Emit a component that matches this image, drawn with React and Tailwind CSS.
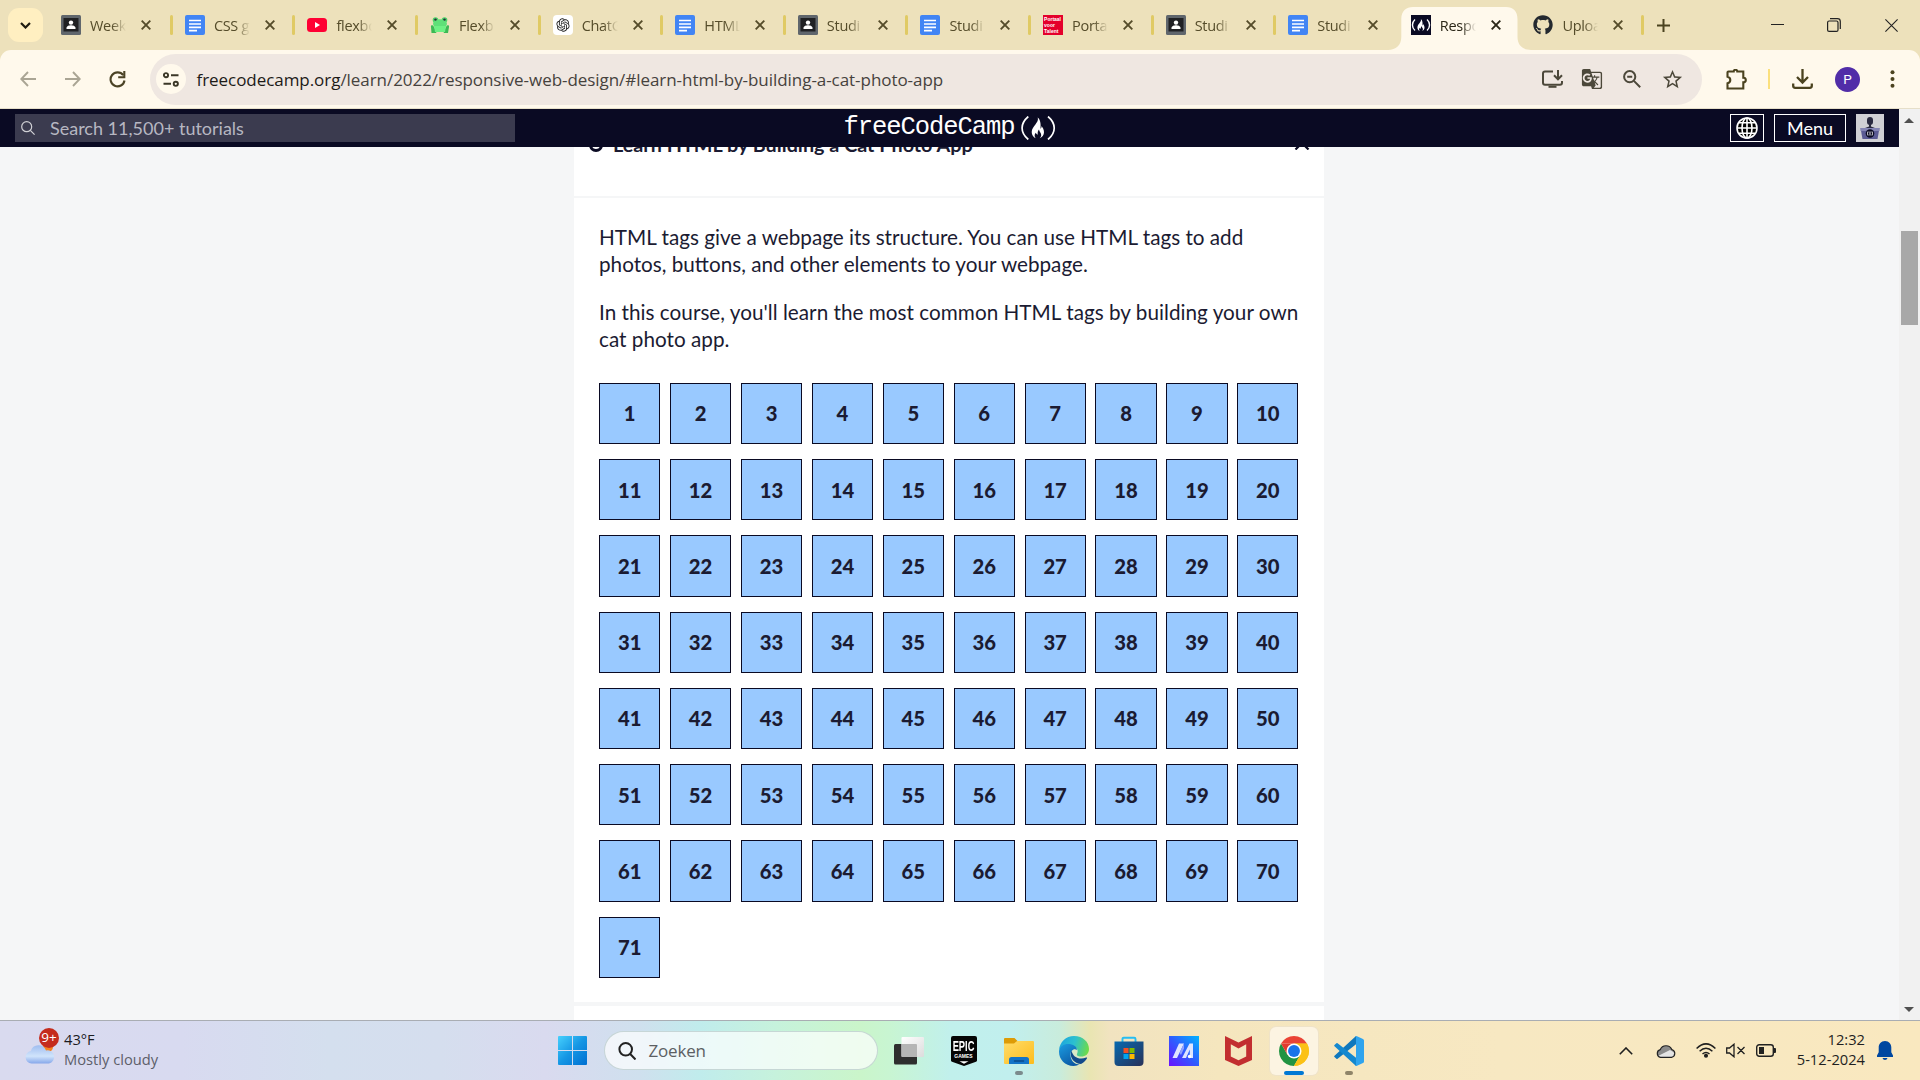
import { FaGithub } from "react-icons/fa";
import { RiOpenaiFill } from "react-icons/ri";
import { MdGTranslate, MdStarBorder } from "react-icons/md";

const FLAME = "M7.2 0c.9 3.2-.9 5-2.5 7.2C3.300 9.100 1.200 11.300 1.200 14.600c0 2.900 1.600 5 4 6.200-1.600-2.100-1.300-4.200.1-5.600.5 1.200 1.200 1.700 2 1.800-.4-2 .1-3.600 1.200-5 .2 2.400 2.200 3.300 2.200 5.600 0 1.400-.6 2.400-1.500 3.200 2.400-1 4.300-3.200 4.300-6 0-2.800-1.400-4.700-2.500-6.200.1 1.300-.2 2.100-1 2.600C10.300 7.200 10.400 2.800 7.200 0z";

const ContactIcon = () => (
  <svg className="size-5" viewBox="0 0 20 20">
    <rect width="20" height="20" rx="1.500" fill="#60666c" />
    <rect x="2.500" y="3" width="15" height="13.500" fill="#202124" />
    <circle cx="10" cy="7.600" r="2.200" fill="#fff" />
    <path d="M5.500 14v-1.200c0-1.700 3-2.500 4.500-2.500s4.500.8 4.500 2.500V14z" fill="#fff" />
  </svg>
);
const DocsIcon = () => (
  <svg className="size-5" viewBox="0 0 20 20">
    <rect width="20" height="20" rx="2" fill="#4285f4" />
    <path d="M4 5.500h12M4 9h12M4 12.300h12M4 15.600h8" stroke="#fff" strokeWidth="1.700" />
  </svg>
);
const YoutubeIcon = () => (
  <svg className="size-5" viewBox="0 0 20 20">
    <rect y="3" width="20" height="14" rx="3.500" fill="#ff0033" />
    <path d="M8 7l5 3-5 3z" fill="#fff" />
  </svg>
);
const FrogIcon = () => (
  <svg className="size-5" viewBox="0 0 20 20">
    <circle cx="5.500" cy="5" r="2.800" fill="#4fd06a" />
    <circle cx="14.500" cy="5" r="2.800" fill="#4fd06a" />
    <ellipse cx="10" cy="8.800" rx="7" ry="4.600" fill="#5fe078" />
    <path d="M1 12c-.6-2 2-2.600 3 0l1 2h10l1-2c1-2.600 3.600-2 3 0l-1 6h-4l-1-2H7l-1 2H1.500z" fill="#3cb954" />
    <path d="M4 11h12l-1 6H5z" fill="#6ef084" />
    <circle cx="5.500" cy="4.600" r="1.200" fill="#25303b" />
    <circle cx="14.500" cy="4.600" r="1.200" fill="#25303b" />
  </svg>
);
const ChatIcon = () => (
  <div className="flex size-5 items-center justify-center rounded bg-white">
    <RiOpenaiFill className="size-4 text-[#222]" />
  </div>
);
const PortaalIcon = () => (
  <div className="flex size-5 flex-col overflow-hidden bg-[#e4002b] pt-px pl-px font-['Liberation_Sans'] text-[5px] leading-[6px] font-bold text-white">
    <span>Portaal</span>
    <span>voor</span>
    <span>Talent</span>
  </div>
);
const CampIcon = () => (
  <svg className="size-5" viewBox="0 0 20 20">
    <rect width="20" height="20" fill="#0a0a23" />
    <path d="M4 4.500C.6 7.500.6 12.500 4 15.500M16 4.500c3.400 3 3.400 8 0 11" stroke="#fff" strokeWidth="1.400" fill="none" />
    <path d={FLAME} fill="#fff" transform="translate(5.700 4) scale(.58)" />
  </svg>
);
const HubIcon = () => <FaGithub className="size-5 text-[#24292f]" />;

const TABS = [
  ["Week", ContactIcon],
  ["CSS g", DocsIcon],
  ["flexbo", YoutubeIcon],
  ["Flexb", FrogIcon],
  ["ChatG", ChatIcon],
  ["HTML", DocsIcon],
  ["Studi", ContactIcon],
  ["Studi", DocsIcon],
  ["Porta", PortaalIcon],
  ["Studi", ContactIcon],
  ["Studi", DocsIcon],
  ["Respo", CampIcon],
  ["Uploa", HubIcon],
];
const ACTIVE = 11;

const Cross = () => (
  <svg className="size-[10px] shrink-0" viewBox="0 0 10 10" stroke="currentColor" strokeWidth="1.900">
    <path d="M.7.7l8.600 8.600M9.300.7L.7 9.300" />
  </svg>
);

function Tab({ title, Icon, active, sep }) {
  return (
    <div className={active ? "relative flex h-full w-[122.600px] shrink-0 items-center pl-[13px] text-[#2b2718]" : "relative flex h-full w-[122.600px] shrink-0 items-center pl-[13px] text-[#554c2a] first-of-type:w-[123.900px]"}>
      {active && (
        <svg className="absolute bottom-0 -left-[10px] h-[43px] w-[143px]" viewBox="0 0 143 43">
          <path d="M0 43c8 0 13.300-5 13.300-13V12C13.300 4 18 0 25 0h93c7 0 11.500 4 11.500 12v18c0 8 5 13 13.500 13z" fill="#fff9ec" />
        </svg>
      )}
      <div className="relative shrink-0"><Icon /></div>
      <div className="relative top-px ml-[9px] w-[36px] overflow-hidden text-[14.500px] tracking-[-0.300px] whitespace-nowrap [mask-image:linear-gradient(to_right,black_60%,transparent)]">{title}</div>
      <div className="relative ml-[15px]"><Cross /></div>
      {sep && <div className="ml-auto h-5 w-[3px] translate-x-px rounded-full bg-[#e0ca64]" />}
    </div>
  );
}

function TabStrip() {
  return (
    <div className="flex h-[50px] items-center bg-[#ede1bb] pl-2">
      <div className="mr-[5px] flex h-[34px] w-[35px] items-center justify-center rounded-[11px] bg-[#ffefc1]">
        <svg className="h-[7px] w-[11px]" viewBox="0 0 11 7" fill="none" stroke="#1f1b10" strokeWidth="2.200"><path d="M1 1l4.500 4.500L10 1" /></svg>
      </div>
      <div className="flex h-full">
        {TABS.map(([title, Icon], i) => (
          <Tab key={i} title={title} Icon={Icon} active={i === ACTIVE} sep={i !== ACTIVE && i !== ACTIVE - 1} />
        ))}
      </div>
      <svg className="ml-[14px] size-[13px]" viewBox="0 0 13 13" stroke="#4b431f" strokeWidth="2"><path d="M6.500 0v13M0 6.500h13" /></svg>
      <div className="mr-[22px] ml-auto flex items-center text-[#222]">
        <svg className="mr-[43px] h-[14px] w-[13px]" viewBox="0 0 13 14" stroke="currentColor"><path d="M0 6.500h13" /></svg>
        <svg className="mr-[44px] size-[14px]" viewBox="0 0 14 14" stroke="currentColor" strokeWidth="1.200" fill="none"><rect x=".6" y="3" width="10.400" height="10.400" rx="1.500" /><path d="M3 .7h7.500a2.800 2.800 0 0 1 2.800 2.800V11" /></svg>
        <svg className="size-[13px]" viewBox="0 0 13 13" stroke="currentColor" strokeWidth="1.100"><path d="M.4.4l12.200 12.200M12.600.4L.4 12.600" /></svg>
      </div>
    </div>
  );
}

function Toolbar() {
  return (
    <div className="bg-[#ede1bb]">
      <div className="flex h-[59px] items-center rounded-t-[11px] border-b border-[#e6dfc9] bg-[#fff9ec]">
        <svg className="ml-5 size-4" viewBox="0 0 16 16" fill="none" stroke="#aaa594" strokeWidth="1.900"><path d="M16 8H1.500M8 1L1.300 8 8 15" /></svg>
        <svg className="ml-[29px] size-4" viewBox="0 0 16 16" fill="none" stroke="#aaa594" strokeWidth="1.900"><path d="M0 8h14.500M8 1l6.700 7L8 15" /></svg>
        <svg className="ml-[28px] size-[17px]" viewBox="0 0 17 17" fill="none" stroke="#4b4325" strokeWidth="2.100"><path d="M14.200 4.200A7 7 0 1 0 15.500 9.500" /><path d="M15.300 0v6.300H9.200" /></svg>
        <div className="ml-[24px] flex h-[51px] w-[1552px] items-center rounded-full bg-[#efe7e1] pr-5 pl-[6px]">
          <div className="flex size-[30px] items-center justify-center rounded-full bg-[#fff9ec]">
            <svg className="h-[15px] w-4" viewBox="0 0 16 15" fill="none" stroke="#3b3727" strokeWidth="1.900"><circle cx="3" cy="3.200" r="2.100" /><path d="M8 3.200h7.500M.5 11.800H8" /><circle cx="12.800" cy="11.800" r="2.100" /></svg>
          </div>
          <div className="relative top-px ml-[10.500px] text-[17px] tracking-[-0.050px] whitespace-nowrap text-[#46423d]"><span className="text-[#1d1b18]">freecodecamp.org</span>/learn/2022/responsive-web-design/#learn-html-by-building-a-cat-photo-app</div>
          <div className="ml-auto flex items-center text-[#4c483a]">
            <svg className="mr-[18px] h-[18px] w-[21px]" viewBox="0 0 21 18" fill="none" stroke="currentColor" strokeWidth="2"><path d="M11 1.500H3Q1 1.500 1 3.500v9.300q0 2 2 2h15q2 0 2-2V11" /><path d="M6.500 16.800h8" /><path d="M16 0v9M12 5.300l4 4 4-4" /></svg>
            <MdGTranslate className="mr-[20px] size-[22px]" />
            <svg className="mr-[20px] size-[18px]" viewBox="0 0 18 18" fill="none" stroke="currentColor" strokeWidth="2"><circle cx="6.700" cy="6.700" r="5.600" /><path d="M4.200 6.700h5M10.900 10.900L17.200 17.200" /></svg>
            <MdStarBorder className="-mr-[2px] size-[23px]" />
          </div>
        </div>
        <svg className="ml-6 size-[21px]" viewBox="0 0 21 21" fill="none" stroke="#4b431f" strokeWidth="2.100"><path d="M2.500 2.500h5.200q0-1.700 1.800-1.700t1.800 1.700h6v6.200q2.500 0 2.500 2.300t-2.500 2.300v6.200H1.500v-5.200q2.800-.8 2.800-3.300T1.500 7.700V3.500q0-1 1-1z" /></svg>
        <div className="ml-[21px] h-5 w-[2px] bg-[#fbe07d]" />
        <svg className="ml-[22px] h-5 w-[21px]" viewBox="0 0 21 20" fill="none" stroke="#4b431f" strokeWidth="2.300"><path d="M10.500 0v13M5 8l5.500 5.500L16 8M1.200 14.500v2.300q0 2 2 2h14.600q2 0 2-2v-2.300" /></svg>
        <div className="ml-[22px] flex size-[25px] items-center justify-center rounded-full bg-[#512da8] font-[Roboto] text-[13.500px] text-white">P</div>
        <svg className="ml-[30px] h-[18px] w-[5px]" viewBox="0 0 5 18" fill="#4b431f"><circle cx="2.500" cy="2.200" r="2" /><circle cx="2.500" cy="9" r="2" /><circle cx="2.500" cy="15.800" r="2" /></svg>
      </div>
    </div>
  );
}

function SiteHeader() {
  return (
    <div className="relative z-10 grid h-[38px] shrink-0 grid-cols-[1fr_auto_1fr] items-center bg-[#0a0a23] pr-[15px] pl-[15px] font-[Lato]">
      <div className="flex h-7 w-[500px] items-center bg-[#3b3b4f] pl-[6px] text-[18px] text-[#b7b7c2]">
        <svg className="mr-[15px] size-[14px]" viewBox="0 0 14 14" fill="none" stroke="#d0d0d5" strokeWidth="1.200"><circle cx="5.700" cy="5.700" r="5" /><path d="M9.300 9.300L13.600 13.600" /></svg>
        Search 11,500+ tutorials
      </div>
      <div className="flex h-full items-center text-white">
        <span className="-mt-[1px] font-['Liberation_Mono'] text-[25.500px] leading-none tracking-[-1.050px]">freeCodeCamp</span>
        <svg className="ml-[5px] h-[24px] w-[36px]" viewBox="0 0 36 24" fill="none" stroke="#fff" strokeWidth="1.700">
          <path d="M8.300.5C0 7.500 0 16.500 8.300 23.500M28 .5c8.300 7 8.300 16 0 23" />
          <path d={FLAME} fill="#fff" stroke="none" transform="translate(10.500 1.500)" />
        </svg>
      </div>
      <div className="flex items-center justify-end">
        <div className="flex h-7 w-[34px] items-center justify-center border border-white">
          <svg className="size-[22px]" viewBox="0 0 22 22" fill="#000" stroke="#fff" strokeWidth="1.600"><circle cx="11" cy="11" r="10" /><ellipse cx="11" cy="11" rx="5" ry="10" /><path d="M11 1v20M1 11h20M2.800 5.700h16.400M2.800 16.300h16.400" /></svg>
        </div>
        <div className="ml-[10px] flex h-7 w-[72px] items-center justify-center border border-white text-[18px] text-white">Menu</div>
        <svg className="ml-[10px] size-7" viewBox="0 0 28 28">
          <rect width="28" height="28" fill="#d0d0d5" />
          <rect x="11" y="3" width="6" height="8" rx="3" fill="#2a2a40" />
          <path d="M13 10h2v2.500l4 1.500H9l4-1.500z" fill="#2a2a40" />
          <path d="M4.500 14h19l-2 11h-15z" fill="#5b5b94" />
          <path d="M4.500 14h19v3h-19z" fill="#8585b5" />
          <circle cx="14" cy="19.500" r="4.300" fill="#0a0a23" />
          <path d="M12 17.500q-1 2 0 4M16 17.500q1 2 0 4M14 17.500v4" stroke="#fff" strokeWidth=".9" fill="none" />
        </svg>
      </div>
    </div>
  );
}

const STEPS = Array.from({ length: 71 }, (_, i) => i + 1);

function Course() {
  return (
    <div className="ml-[574px] flex h-[873px] w-[750px] flex-col overflow-hidden font-[Lato] text-[#1b1b32]">
      <div className="flex h-[49px] shrink-0 items-start bg-white">
        <div className="-mt-[9px] ml-[15px] size-[14px] rounded-full border-[3px] border-[#0a0a23]" />
        <div className="-mt-[15px] ml-[10px] text-[19.800px] leading-6 font-bold whitespace-nowrap">Learn HTML by Building a Cat Photo App</div>
        <svg className="-mt-[6px] mr-[14px] ml-auto h-[9px] w-[16px]" viewBox="0 0 16 9" fill="none" stroke="#0a0a23" strokeWidth="2.200"><path d="M1.500 8.500L8 2l6.500 6.500" /></svg>
      </div>
      <div className="mt-[2px] shrink-0 bg-white px-[25px] pt-[25.500px] pb-[24px]">
        <p className="text-[20.700px] leading-[27px]">HTML tags give a webpage its structure. You can use HTML tags to add<br />photos, buttons, and other elements to your webpage.</p>
        <p className="mt-[21px] text-[20.700px] leading-[27px] tracking-[0.025px] whitespace-nowrap">In this course, you'll learn the most common HTML tags by building your own<br />cat photo app.</p>
        <div className="mt-[30.500px] ml-[.1px] grid grid-cols-[repeat(10,61.200px)] gap-x-[9.720px] gap-y-[15.040px]">
          {STEPS.map((n) => (
            <div key={n} className="flex h-[61.200px] items-center justify-center border border-[#0a0a23] bg-[#99c9ff] text-[20.250px] font-black">{n}</div>
          ))}
        </div>
      </div>
      <div className="mt-1 grow bg-white" />
    </div>
  );
}

function Page() {
  return (
    <div className="flex h-[911px] bg-[#f5f6f7]">
      <div className="flex w-[1899px] flex-col">
        <SiteHeader />
        <Course />
      </div>
      <div className="flex grow flex-col items-center bg-[#f1f1f1] pt-[9px]">
        <svg className="mr-px h-[5px] w-[10px]" viewBox="0 0 10 5" fill="#505050"><path d="M0 5l5-5 5 5z" /></svg>
        <div className="mt-[108px] mr-px h-[94px] w-[17px] bg-[#a8a8a8]" />
        <svg className="mt-auto mr-px mb-[8px] h-[5px] w-[10px]" viewBox="0 0 10 5" fill="#505050"><path d="M0 0l5 5 5-5z" /></svg>
      </div>
    </div>
  );
}

const WindowsLogo = () => (
  <svg className="size-[29px]" viewBox="0 0 29 29">
    <defs><linearGradient id="win" x1="0" y1="0" x2="1" y2="1"><stop stopColor="#46d0fd" /><stop offset=".5" stopColor="#1596e4" /><stop offset="1" stopColor="#006fd1" /></linearGradient></defs>
    <path d="M1 0h13v14H0V1q0-1 1-1zM15 0h13q1 0 1 1v13H15zM0 15h14v14H1q-1 0-1-1zM15 15h14v13q0 1-1 1H15z" fill="url(#win)" />
  </svg>
);
const TaskView = () => (
  <svg className="size-[30px]" viewBox="0 0 30 30">
    <defs><linearGradient id="tv" x1="0" y1="0" x2="1" y2="1"><stop stopColor="#fff" /><stop offset="1" stopColor="#dcdcdc" /></linearGradient></defs>
    <rect y="8" width="23" height="20.500" rx="1.500" fill="#2e2e2e" />
    <rect x="7.500" y="1" width="22.500" height="20" rx="1" fill="url(#tv)" />
    <path d="M7.500 8H22q1 0 1 1v12H8.500q-1 0-1-1z" fill="#b5b5b5" />
  </svg>
);
const Epic = () => (
  <div className="relative h-[30px] w-[26px]">
    <svg className="absolute inset-0" viewBox="0 0 26 30"><path d="M2 0h22q2 0 2 2v22.500q0 1-1 1.300L13 30 1 25.800q-1-.3-1-1.300V2q0-2 2-2z" fill="#050505" /><path d="M8.500 25.300h9L13 27.800z" fill="#fff" /></svg>
    <div className="relative flex flex-col items-center pt-[3px] font-['Liberation_Sans'] font-bold text-white">
      <span className="scale-x-[.62] text-[15px] leading-[13px]">EPIC</span>
      <span className="mt-[2px] text-[5px] leading-[5px]">GAMES</span>
    </div>
  </div>
);
const Folder = () => (
  <svg className="size-[30px]" viewBox="0 0 30 30">
    <defs><linearGradient id="fo" x1="0" y1="0" x2="1" y2="1"><stop stopColor="#ffdc6a" /><stop offset="1" stopColor="#fdbc1c" /></linearGradient></defs>
    <path d="M0 3q0-1 1-1h9.500l3 3H28q1 0 1 1v5H0z" fill="#dd9b07" />
    <path d="M0 7.500h10L13 5h16q1 0 1 1v21q0 1-1 1H1q-1 0-1-1z" fill="url(#fo)" />
    <path d="M5 28v-4.500q0-2.500 2.500-2.500h15q2.500 0 2.500 2.500V28z" fill="#1374c8" />
    <path d="M10.500 25h9" stroke="#0a4a8a" strokeWidth="1.500" strokeLinecap="round" />
  </svg>
);
const Edge = () => (
  <svg className="size-[30px]" viewBox="0 0 30 30">
    <defs>
      <linearGradient id="e1" x1="0" y1=".3" x2="1" y2=".5"><stop stopColor="#1ba5df" /><stop offset=".5" stopColor="#2cc0cf" /><stop offset="1" stopColor="#6ddb4b" /></linearGradient>
      <linearGradient id="e2" x1="0" y1="0" x2=".6" y2="1"><stop stopColor="#1b9de2" /><stop offset="1" stopColor="#0c59a4" /></linearGradient>
    </defs>
    <path d="M0 14C.8 6 7 0 15 0c9 0 15 6 15 13 0 5-3.600 7.500-7.800 7.500-3.500 0-5-1.300-4-3 1.600-3-.5-7.500-6.200-7.500C7 9.500 2 10 0 14z" fill="url(#e1)" />
    <path d="M0 15.500c0-5 5-7.500 9-7.500 5 0 9 2.500 9 6-3-2-6.500.5-6.500 5 0 5.500 4.500 10.500 9.500 9-2 1.300-4 2-6.500 2C6 30 0 23.500 0 15.500z" fill="url(#e2)" />
    <path d="M12.500 14.500c-3 8 4 13.500 9.500 13.500 3-1.500 5-4 6-5.800.3-.6-.2-1-.8-.7-7 3-13.500-.5-14.700-7z" fill="#114a8b" />
  </svg>
);
const Store = () => (
  <svg className="size-[30px]" viewBox="0 0 30 30">
    <defs><linearGradient id="st" x1="0" y1="0" x2="1" y2="1"><stop stopColor="#0669b0" /><stop offset="1" stopColor="#293158" /></linearGradient></defs>
    <path d="M8.500 6.500V3q0-1.300 1.300-1.300h10.400q1.300 0 1.300 1.300v3.500" fill="none" stroke="#25bdf3" strokeWidth="1.900" />
    <path d="M.5 5.500h29V26q0 4-4 4h-21q-4 0-4-4z" fill="url(#st)" />
    <path d="M9.500 12h5v5h-5z" fill="#f25022" /><path d="M15.500 12h5v5h-5z" fill="#7fba00" /><path d="M9.500 18h5v5h-5z" fill="#00a4ef" /><path d="M15.500 18h5v5h-5z" fill="#ffb900" />
  </svg>
);
const MyAsus = () => (
  <svg className="size-[30px]" viewBox="0 0 30 30">
    <defs><linearGradient id="as" x1="0" y1="1" x2="1" y2="0"><stop stopColor="#6a11ff" /><stop offset=".5" stopColor="#2f5cff" /><stop offset="1" stopColor="#00b4ff" /></linearGradient></defs>
    <rect width="30" height="30" fill="url(#as)" />
    <path d="M3.500 22L10 7.500h5L8 22zM13 22L20.500 7.500H24V22h-3.200v-8.500L17 22z" fill="#dfe5ff" />
    <path d="M10.500 17l4.500-9.500v5L12 19z" fill="#8fa0ff" />
    <circle cx="20.500" cy="20.500" r="1.700" fill="#fff" />
  </svg>
);
const Mcafee = () => (
  <svg className="h-[30px] w-[27px]" viewBox="0 0 27 30"><path d="M0 0l13.500 6.500L27 0v24l-13.500 6L0 24zM5.800 8.200v12.300l7.700 3.700 7.700-3.700V8.200l-7.700 4.200z" fill="#c22e30" /></svg>
);
const Chrome = () => (
  <svg className="size-[30px]" viewBox="0 0 48 48">
    <path d="M3.220 12A24 24 0 0 1 44.780 12L24 12z" fill="#ea4335" />
    <path d="M3.220 12A24 24 0 0 0 24 48L34.400 30 24 24 13.600 30z" fill="#229342" />
    <path d="M44.780 12A24 24 0 0 1 24 48L34.400 30 24 12z" fill="#fbc116" />
    <path d="M3.220 12h41.560L24 24 13.600 30z" fill="#e33b2e" />
    <path d="M24 12h20.780A24 24 0 0 1 24 48L34.400 30z" fill="#fbc116" />
    <circle cx="24" cy="24" r="12" fill="#fff" />
    <circle cx="24" cy="24" r="9.500" fill="#1a73e8" />
  </svg>
);
const Code = () => (
  <svg className="size-[30px]" viewBox="0 0 30 30">
    <path d="M22 0v8.300L3.600 22.800q-.6.500-1.200 0L.5 21.100q-.7-.7 0-1.300z" fill="#0f78bd" />
    <path d="M22 30v-8.300L3.600 7.200q-.6-.5-1.200 0L.5 8.900q-.7.700 0 1.300z" fill="#1488cf" />
    <path d="M21 .5q.9-.8 2-.3l6 2.700q1 .5 1 1.600v21q0 1.100-1 1.600l-6 2.700q-1.100.5-2-.3 1 .5 1-1V1.500q0-1.500-1-1z" fill="#2fa4ee" />
  </svg>
);

function Pinned({ children, className, bar }) {
  return (
    <div className={"relative flex h-12 w-12 items-center justify-center " + (className || "")}>
      {children}
      {bar && <div className={"absolute bottom-0 h-1 rounded-full " + bar} />}
    </div>
  );
}

function Taskbar() {
  return (
    <div className="grid h-[60px] grid-cols-[534px_auto_1fr] items-center border-t border-[#a9adb3] bg-[linear-gradient(90deg,#d9daef_0px,#d8daf0_180px,#d4dfee_330px,#d5deee_440px,#d9daef_545px,#cfe0ee_640px,#c0ecec_700px,#c6f2dc_775px,#caf5ca_860px,#c8f5d2_890px,#c1f0ec_950px,#c1efee_1010px,#c9ecdc_1060px,#e9e5b2_1090px,#f1e3c0_1110px,#f5e6be_1220px,#f7e8c2_1500px,#f9e8bf_1920px)]">
      <div className="flex items-center pl-[25px]">
        <div className="relative h-[40px] w-[31px]">
          <svg className="absolute top-[12px] left-0 h-[22px] w-[31px]" viewBox="0 0 31 22">
            <defs><linearGradient id="cl" x1="0" y1="0" x2="0" y2="1"><stop stopColor="#9fbdf0" /><stop offset=".6" stopColor="#d0e4fb" /><stop offset="1" stopColor="#86a7ea" /></linearGradient></defs>
            <circle cx="23" cy="4" r="5" fill="#f58220" />
            <path d="M6.500 20.500a6.300 6.300 0 0 1-.7-12.500A8 8 0 0 1 21 7.500a6.600 6.600 0 0 1 3 13z" fill="url(#cl)" />
          </svg>
          <div className="absolute -top-[3px] left-[14px] flex size-5 items-center justify-center rounded-full bg-[#c42b1c] text-[13.500px] text-white">9+</div>
        </div>
        <div className="mb-[3px] ml-2 text-[14.700px] leading-[20px]">
          <div className="text-[#1b1b1f]">43°F</div>
          <div className="text-[#5d5f6a]">Mostly cloudy</div>
        </div>
      </div>
      <div className="flex items-center">
        <div className="ml-[24px]"><WindowsLogo /></div>
        <div className="ml-[16.500px] flex h-[39px] w-[274px] items-center rounded-full border border-[#b5c8c8]/70 bg-white/70 pl-[13px] text-[17px] tracking-[-0.200px] text-[#5c6063]">
          <svg className="mr-[13px] size-[18px]" viewBox="0 0 18 18" fill="none" stroke="#222" strokeWidth="2"><circle cx="7.700" cy="7.300" r="6.300" /><path d="M12.200 12l5.300 5.500" /></svg>
          Zoeken
        </div>
        <div className="ml-[7px] flex gap-[7px]">
          <Pinned><TaskView /></Pinned>
          <Pinned><Epic /></Pinned>
          <Pinned bar="w-2 bg-[#7b8b8d]"><Folder /></Pinned>
          <Pinned><Edge /></Pinned>
          <Pinned><Store /></Pinned>
          <Pinned><MyAsus /></Pinned>
          <Pinned><Mcafee /></Pinned>
          <Pinned className="rounded-md bg-[#fcf4e2] shadow-[0_0_0_1px_#efe3c8]" bar="w-5 bg-[#0078d4]"><Chrome /></Pinned>
          <Pinned bar="w-2 bg-[#8f8468]"><Code /></Pinned>
        </div>
      </div>
      <div className="flex items-center justify-end pr-[27px] text-[#1f1f1f]">
        <svg className="mr-[23px] h-[8px] w-[14px]" viewBox="0 0 14 8" fill="none" stroke="currentColor" strokeWidth="1.600"><path d="M.8 7.200L7 1l6.200 6.200" /></svg>
        <svg className="mr-[20px] h-[14px] w-[20px]" viewBox="0 0 20 14"><path d="M4.500 13.300a3.900 3.900 0 0 1-.3-7.600A6.300 6.300 0 0 1 15.800 5.500a4 4 0 0 1-.3 7.800z" fill="#8b8b8b" /><path d="M2 12L14 6l5 3q.5 4.300-4 4.300H4.500z" fill="#e4e4e4" /><path d="M4.500 13.300a3.900 3.900 0 0 1-.3-7.600A6.300 6.300 0 0 1 15.800 5.500a4 4 0 0 1-.3 7.800z" fill="none" stroke="#222" strokeWidth="1.200" /></svg>
        <svg className="mr-[10px] h-[15px] w-[20px]" viewBox="0 0 20 15" fill="none" stroke="currentColor" strokeWidth="1.500"><path d="M.6 5.500Q10-3.700 19.400 5.500M3.600 8.300q6.400-6 12.800 0M6.500 11q3.500-3 7 0" /><circle cx="10" cy="12.800" r="1.300" fill="currentColor" /></svg>
        <svg className="mr-[11px] h-[15px] w-[19px]" viewBox="0 0 19 15" fill="none" stroke="currentColor" strokeWidth="1.300"><path d="M.7 5v5h2.800L8 13.800V1.200L3.500 5zM11.500 4l7 7M18.500 4l-7 7" /></svg>
        <svg className="mr-[21px] h-[13px] w-[20px]" viewBox="0 0 20 13"><rect x=".7" y=".7" width="16.600" height="11.600" rx="2.500" fill="none" stroke="#222" strokeWidth="1.400" /><rect x="3" y="3" width="5" height="7" fill="#222" /><path d="M18 4h1q1 0 1 1v3q0 1-1 1h-1z" fill="#222" /></svg>
        <div className="mr-[12px] mb-[3px] text-right text-[14.700px] leading-[20px]"><div>12:32</div><div>5-12-2024</div></div>
        <svg className="h-[19px] w-4" viewBox="0 0 16 19" fill="#0047a0"><path d="M8 0c-4 0-6.300 3-6.300 6.500v4.700L0 14.500V16h16v-1.500l-1.700-3.300V6.500C14.300 3 12 0 8 0zM5.500 17h5Q10 19 8 19t-2.500-2z" /></svg>
      </div>
    </div>
  );
}

export default function App() {
  return (
    <div className="h-[1080px] w-[1920px] overflow-hidden font-['Open_Sans',sans-serif]">
      <TabStrip />
      <Toolbar />
      <Page />
      <Taskbar />
    </div>
  );
}
